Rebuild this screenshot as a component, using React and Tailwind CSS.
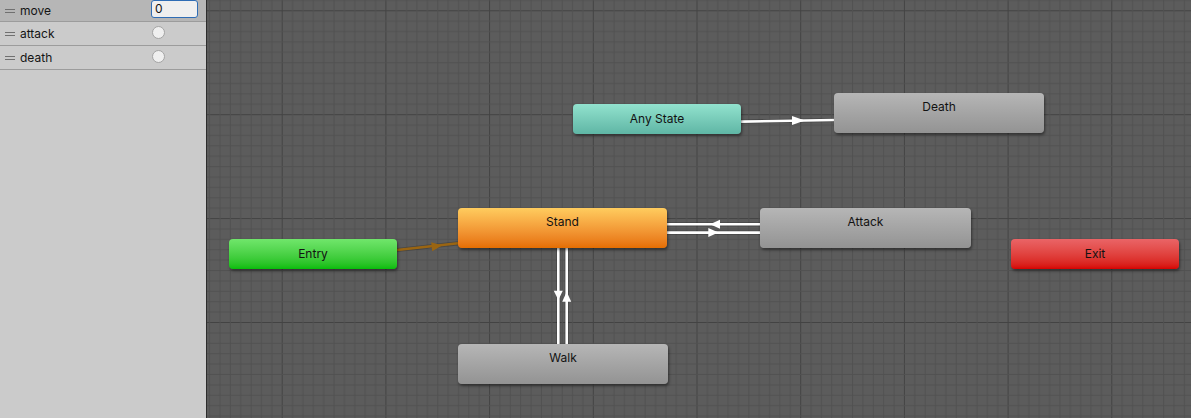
import React from "react";

const params = [
    { name: "move", kind: "int", value: "0", selected: true },
    { name: "attack", kind: "trigger" },
    { name: "death", kind: "trigger" },
];

const nodes = [
    { label: "Any State", x: 366, y: 104, w: 168, h: 30, cls: "bg-gradient-to-b from-[#92e2ce] to-[#5fb6a5]", small: true },
    { label: "Death", x: 627, y: 93, w: 210, h: 40, cls: "bg-gradient-to-b from-[#b6b6b6] to-[#939393]" },
    { label: "Stand", x: 251, y: 208, w: 209, h: 40, cls: "bg-gradient-to-b from-[#ffcc5e] to-[#e56e00]" },
    { label: "Attack", x: 553, y: 208, w: 211, h: 40, cls: "bg-gradient-to-b from-[#b6b6b6] to-[#939393]" },
    { label: "Entry", x: 22, y: 239, w: 168, h: 30, cls: "bg-gradient-to-b from-[#70e66b] to-[#05bd08]", small: true },
    { label: "Exit", x: 804, y: 239, w: 168, h: 30, cls: "bg-gradient-to-b from-[#ea6466] to-[#d60000]", small: true },
    { label: "Walk", x: 251, y: 344, w: 210, h: 40, cls: "bg-gradient-to-b from-[#b6b6b6] to-[#939393]" },
];

const font = { fontFamily: "Inter, 'Noto Sans', sans-serif" };

function ParamRow({ p }) {
    return (
        <div
            className={`flex items-center border-b border-[#9c9c9c] pl-[5px] ${p.selected ? "bg-[#b6b6b6] h-[22px]" : "bg-[#cbcbcb] h-[24px]"}`}
        >
            <div className="flex flex-col gap-[2px] w-[10px] mr-[5px]">
                <span className="block h-px bg-[#707070]" />
                <span className="block h-px bg-[#707070]" />
            </div>
            <span className="text-[12px] text-[#141414] flex-1">{p.name}</span>
            {p.kind === "int" ? (
                <div className="w-[47px] h-[18px] mr-[8px] -mt-[4px] rounded-[3px] border border-[#2f6db5] bg-[#efefef] text-[12px] text-[#141414] leading-[16px] pl-[3px]">
                    {p.value}
                </div>
            ) : (
                <div className="w-[13px] h-[13px] rounded-full border border-[#a4a4a4] bg-[#efefef] mr-[41px] -mt-[3px]" />
            )}
        </div>
    );
}

function Line({ x1, y1, x2, y2, color = "#ffffff" }) {
    return (
        <g>
            <line x1={x1} y1={y1} x2={x2} y2={y2} stroke="rgba(0,0,0,0.22)" strokeWidth="4.2" />
            <line x1={x1} y1={y1} x2={x2} y2={y2} stroke={color} strokeWidth="2.6" />
        </g>
    );
}

export default function App() {
    return (
        <div className="flex w-[1191px] h-[418px] overflow-hidden" style={font}>
            <div className="w-[207px] shrink-0 bg-[#cbcbcb] border-r border-[#2c2c2c]">
                {params.map((p) => (
                    <ParamRow key={p.name} p={p} />
                ))}
            </div>

            <div className="relative flex-1 h-full bg-[#5c5c5c] overflow-hidden">
                <svg className="absolute inset-0" width="984" height="418">
                    <defs>
                        <pattern id="grid" x="74.7" y="10.3" width="103.7" height="103.9" patternUnits="userSpaceOnUse">
                            {Array.from({ length: 10 }).map((_, i) => (
                                <g key={i}>
                                    <line x1={i * 10.37 + 0.5} y1="0" x2={i * 10.37 + 0.5} y2="103.9" stroke={i === 0 ? "#434343" : "#515151"} strokeWidth="1" />
                                    <line x1="0" y1={i * 10.39 + 0.5} x2="103.7" y2={i * 10.39 + 0.5} stroke={i === 0 ? "#434343" : "#515151"} strokeWidth="1" />
                                </g>
                            ))}
                        </pattern>
                    </defs>
                    <rect width="984" height="418" fill="url(#grid)" />

                    {/* any state -> death */}
                    <Line x1={534} y1={121.6} x2={627} y2={120} />
                    <polygon points="598,120.4 585,116 585,125" fill="#ffffff" />

                    {/* entry -> stand */}
                    <Line x1={190} y1={250} x2={251} y2={243.3} color="#9a6512" />
                    <polygon points="235,245.6 225.2,251.2 224.2,242.2" fill="#9a6512" />

                    {/* stand <-> attack */}
                    <Line x1={460} y1={224.3} x2={553} y2={224.3} />
                    <polygon points="503,224.3 513,219.8 513,228.8" fill="#ffffff" />
                    <Line x1={460} y1={232.6} x2={553} y2={232.6} />
                    <polygon points="511.5,232.6 501.3,228.1 501.3,237.1" fill="#ffffff" />

                    {/* stand <-> walk */}
                    <Line x1={351.3} y1={248} x2={351.3} y2={344.3} />
                    <polygon points="351.3,300 346.8,290.7 355.8,290.7" fill="#ffffff" />
                    <Line x1={359.7} y1={248} x2={359.7} y2={344.3} />
                    <polygon points="359.7,291.7 355.2,301.7 364.2,301.7" fill="#ffffff" />
                </svg>

                {nodes.map((n) => (
                    <div
                        key={n.label}
                        className={`absolute flex justify-center rounded-[4px] shadow-[1px_2px_3px_rgba(0,0,0,0.45)] text-[12px] text-[#121212] ${n.small ? "items-center" : "items-start pt-[7px]"} ${n.cls}`}
                        style={{ left: n.x, top: n.y, width: n.w, height: n.h }}
                    >
                        <span className="leading-[14px]">{n.label}</span>
                    </div>
                ))}
            </div>
        </div>
    );
}
